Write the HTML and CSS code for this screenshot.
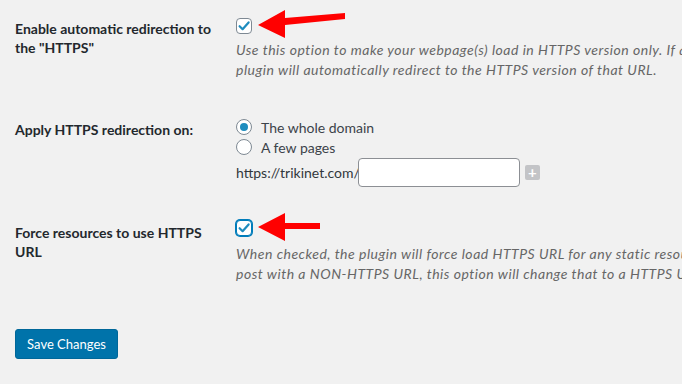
FILE: index.html
```html
<!DOCTYPE html>
<html lang="en">
<head>
    <meta charset="UTF-8">
    <meta name="viewport" content="width=device-width, initial-scale=1.0">
    <title>HTTPS Settings</title>
    <link rel="stylesheet" href="styles.css">
</head>
<body>
    <form class="settings">
        <div class="row row-redirect">
            <div class="label">Enable automatic redirection to the "HTTPS"</div>
            <div class="field">
                <div class="check-line">
                    <span class="checkbox">
                        <svg viewBox="0 0 16 16" width="16" height="16"><path d="M3.6 8.2 L6.6 11.2 L12.6 4.4" fill="none" stroke="#1e8cbe" stroke-width="2.2" stroke-linecap="round" stroke-linejoin="round"/></svg>
                    </span>
                    <svg class="arrow arrow-one" width="90" height="32" viewBox="0 0 90 32"><polygon points="0,15 27,0 27,8 87,3 87,9 27,15 27,28" fill="#f00"/></svg>
                </div>
                <p class="desc">Use this option to make your webpage(s) load in HTTPS version only. If a user enters an HTTP URL, the<br>plugin will automatically redirect to the HTTPS version of that URL.</p>
            </div>
        </div>

        <div class="row row-apply">
            <div class="label">Apply HTTPS redirection on:</div>
            <div class="field">
                <label class="radio-line"><span class="radio checked"></span>The whole domain</label>
                <label class="radio-line"><span class="radio"></span>A few pages</label>
                <div class="url-line">
                    <span>https://trikinet.com/</span>
                    <span class="url-input"></span>
                    <span class="add-btn">+</span>
                </div>
            </div>
        </div>

        <div class="row row-force">
            <div class="label">Force resources to use HTTPS URL</div>
            <div class="field">
                <div class="check-line">
                    <span class="checkbox focused">
                        <svg viewBox="0 0 16 16" width="16" height="16"><path d="M3.6 8.2 L6.6 11.2 L12.6 4.4" fill="none" stroke="#1e8cbe" stroke-width="2.2" stroke-linecap="round" stroke-linejoin="round"/></svg>
                    </span>
                    <svg class="arrow arrow-two" width="64" height="30" viewBox="0 0 64 30"><polygon points="0,14 27,0 27,10 62,10 62,16 27,16 27,28" fill="#f00"/></svg>
                </div>
                <p class="desc">When checked, the plugin will force load HTTPS URL for any static resources of the site. If you have a<br>post with a NON-HTTPS URL, this option will change that to a HTTPS URL.</p>
            </div>
        </div>

        <button type="button" class="save-btn">Save Changes</button>
    </form>
</body>
</html>
```

FILE: styles.css
```css
* {
    margin: 0;
    padding: 0;
    box-sizing: border-box;
}

body {
    font-family: Lato, 'Noto Sans', sans-serif;
    font-size: 14px;
    background: #f1f1f1;
    color: #23282d;
    overflow: hidden;
}

.settings {
    padding-left: 15px;
    width: 900px;
}

.row {
    display: grid;
    grid-template-columns: 221px 1fr;
}

.label {
    font-weight: 700;
    line-height: 19px;
    color: #23282d;
    padding-right: 10px;
}

.row-redirect {
    padding-top: 18px;
}

.row-redirect .label {
    padding-top: 1px;
}

.row-apply {
    padding-top: 37px;
}

.row-apply .label {
    padding-top: 3px;
}

.row-force {
    padding-top: 32px;
}

.row-force .label {
    padding-top: 4px;
}

.check-line {
    display: flex;
    align-items: center;
    height: 16px;
}

.checkbox {
    width: 16px;
    height: 16px;
    background: #fff;
    border: 1px solid #7e8993;
    border-radius: 4px;
    display: flex;
    align-items: center;
    justify-content: center;
    flex-shrink: 0;
}

.checkbox svg {
    margin: -1px;
}

.checkbox.focused {
    border-color: #007cba;
    box-shadow: 0 0 0 1px #007cba;
}

.row-force .check-line {
    margin-top: 1px;
}

.arrow {
    margin-left: 6px;
    flex-shrink: 0;
}

.desc {
    margin-top: 6px;
    font-style: italic;
    color: #666;
    line-height: 20px;
    letter-spacing: 0.5px;
    white-space: nowrap;
}

.row-force .desc {
    margin-top: 8px;
}

.radio-line {
    display: flex;
    align-items: center;
    gap: 9px;
    height: 20px;
    color: #3c434a;
}

.radio {
    width: 16px;
    height: 16px;
    border: 1px solid #7e8993;
    border-radius: 50%;
    background: #fff;
    display: flex;
    align-items: center;
    justify-content: center;
}

.radio.checked::after {
    content: "";
    width: 8px;
    height: 8px;
    border-radius: 50%;
    background: #1e8cbe;
}

.url-line {
    display: flex;
    align-items: center;
    margin-top: 1px;
    color: #32373c;
}

.url-input {
    width: 162px;
    height: 29px;
    background: #fff;
    border: 1px solid #8c8f94;
    border-radius: 4px;
    margin-left: -2px;
}

.add-btn {
    width: 15px;
    height: 15px;
    margin-left: 5px;
    background: #c3c4c7;
    border-radius: 2px;
    color: #fff;
    font-weight: 700;
    font-size: 15px;
    line-height: 15px;
    text-align: center;
}

.save-btn {
    margin-top: 45px;
    width: 103px;
    height: 30px;
    background: #0073aa;
    border: 1px solid #006799;
    border-radius: 3px;
    color: #fff;
    font-family: Lato, 'Noto Sans', sans-serif;
    font-size: 13px;
}
```
